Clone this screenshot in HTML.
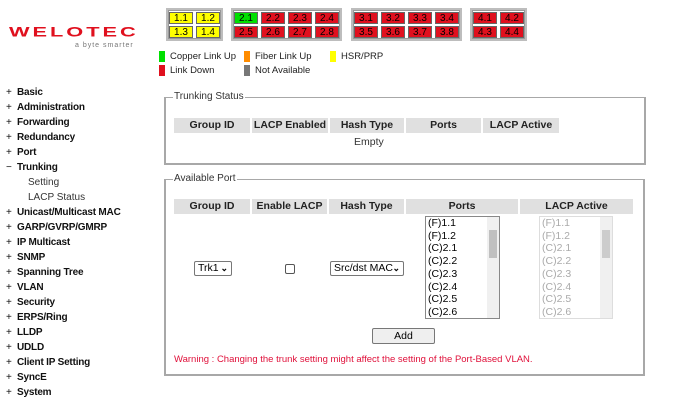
<!DOCTYPE html>
<html><head><style>
*{box-sizing:border-box}
body{margin:0;width:680px;height:409px;background:#fff;font-family:"Liberation Sans",Arial,sans-serif;font-size:11px;color:#000;position:relative;overflow:hidden}
.a{position:absolute}
.blk{position:absolute;border:2px solid #bdbdbd;background:#fff;box-shadow:inset 0 0 0 1px #999}
.c{position:absolute;width:24px;height:12px;border:1px solid #666;font-size:10px;text-align:center;line-height:11px}
.y{background:#ffff00}.r{background:#e0101e}.g{background:#00e000}
.sq{position:absolute;width:6px;height:11px}
.lg{position:absolute;font-size:9.5px;color:#222}
.nav{position:absolute;left:6px;font-weight:bold;font-size:10px;letter-spacing:-0.2px;color:#111;margin-top:1px}
.nav span{display:inline-block;width:11px;font-weight:normal}
.sub{position:absolute;left:28px;font-size:10px;color:#333;margin-top:1px}
.fs{position:absolute;border:2px solid #a8a8a8;border-top-width:1px;border-left-width:2px}
.fl{position:absolute;background:#fff;font-size:10px;color:#333;padding:0 1px}
.th{position:absolute;background:#e0e0e0;font-weight:bold;font-size:10.5px;text-align:center;height:15px;line-height:15px;color:#222}
.lb{position:absolute;border:1px solid #888;background:#fff;font-size:10.5px;line-height:12.7px;padding-left:2px}
.sb{position:absolute;right:0;top:0;width:12px;height:100%;background:#f0f0f0}
.sel{position:absolute;border:1px solid #777;border-radius:2px;background:#fff;font-size:10.5px;height:15px;line-height:13px;padding-left:3px;white-space:nowrap;overflow:hidden}
.sel b{position:absolute;right:3px;top:0;font-weight:bold;font-size:9px}
</style></head><body>
<div class="a" style="left:9px;top:24px;font-size:22px;font-weight:bold;color:#e0101e;letter-spacing:3px;transform:scale(0.99,0.62);transform-origin:top left">WELOTEC</div>
<div class="a" style="left:75px;top:42px;font-size:7px;color:#777;letter-spacing:1px">a byte smarter</div>

<div class="blk" style="left:166px;top:8px;width:57px;height:33px"></div>
<div class="c y" style="left:169px;top:12px">1.1</div><div class="c y" style="left:196px;top:12px">1.2</div>
<div class="c y" style="left:169px;top:26px">1.3</div><div class="c y" style="left:196px;top:26px">1.4</div>
<div class="blk" style="left:231px;top:8px;width:111px;height:33px"></div>
<div class="c g" style="left:234px;top:12px">2.1</div><div class="c r" style="left:261px;top:12px">2.2</div><div class="c r" style="left:288px;top:12px">2.3</div><div class="c r" style="left:315px;top:12px">2.4</div>
<div class="c r" style="left:234px;top:26px">2.5</div><div class="c r" style="left:261px;top:26px">2.6</div><div class="c r" style="left:288px;top:26px">2.7</div><div class="c r" style="left:315px;top:26px">2.8</div>
<div class="blk" style="left:351px;top:8px;width:111px;height:33px"></div>
<div class="c r" style="left:354px;top:12px">3.1</div><div class="c r" style="left:381px;top:12px">3.2</div><div class="c r" style="left:408px;top:12px">3.3</div><div class="c r" style="left:435px;top:12px">3.4</div>
<div class="c r" style="left:354px;top:26px">3.5</div><div class="c r" style="left:381px;top:26px">3.6</div><div class="c r" style="left:408px;top:26px">3.7</div><div class="c r" style="left:435px;top:26px">3.8</div>
<div class="blk" style="left:470px;top:8px;width:57px;height:33px"></div>
<div class="c r" style="left:473px;top:12px">4.1</div><div class="c r" style="left:500px;top:12px">4.2</div>
<div class="c r" style="left:473px;top:26px">4.3</div><div class="c r" style="left:500px;top:26px">4.4</div>

<div class="sq" style="left:159px;top:51px;background:#00e000"></div><div class="lg" style="left:170px;top:51px">Copper Link Up</div>
<div class="sq" style="left:244px;top:51px;background:#ff8c00"></div><div class="lg" style="left:255px;top:51px">Fiber Link Up</div>
<div class="sq" style="left:330px;top:51px;background:#ffff00"></div><div class="lg" style="left:341px;top:51px">HSR/PRP</div>
<div class="sq" style="left:159px;top:65px;background:#e0101e"></div><div class="lg" style="left:170px;top:65px">Link Down</div>
<div class="sq" style="left:244px;top:65px;background:#777"></div><div class="lg" style="left:255px;top:65px">Not Available</div>

<div class="nav" style="top:86px"><span>+</span>Basic</div>
<div class="nav" style="top:101px"><span>+</span>Administration</div>
<div class="nav" style="top:116px"><span>+</span>Forwarding</div>
<div class="nav" style="top:131px"><span>+</span>Redundancy</div>
<div class="nav" style="top:146px"><span>+</span>Port</div>
<div class="nav" style="top:161px"><span>−</span>Trunking</div>
<div class="sub" style="top:176px">Setting</div>
<div class="sub" style="top:191px">LACP Status</div>
<div class="nav" style="top:206px"><span>+</span>Unicast/Multicast MAC</div>
<div class="nav" style="top:221px"><span>+</span>GARP/GVRP/GMRP</div>
<div class="nav" style="top:236px"><span>+</span>IP Multicast</div>
<div class="nav" style="top:251px"><span>+</span>SNMP</div>
<div class="nav" style="top:266px"><span>+</span>Spanning Tree</div>
<div class="nav" style="top:281px"><span>+</span>VLAN</div>
<div class="nav" style="top:296px"><span>+</span>Security</div>
<div class="nav" style="top:311px"><span>+</span>ERPS/Ring</div>
<div class="nav" style="top:326px"><span>+</span>LLDP</div>
<div class="nav" style="top:341px"><span>+</span>UDLD</div>
<div class="nav" style="top:356px"><span>+</span>Client IP Setting</div>
<div class="nav" style="top:371px"><span>+</span>SyncE</div>
<div class="nav" style="top:386px"><span>+</span>System</div>

<div class="fs" style="left:164px;top:97px;width:482px;height:68px"></div>
<div class="fl" style="left:173px;top:91px">Trunking Status</div>
<div class="th" style="left:174px;top:118px;width:76px">Group ID</div>
<div class="th" style="left:252px;top:118px;width:76px">LACP Enabled</div>
<div class="th" style="left:330px;top:118px;width:74px">Hash Type</div>
<div class="th" style="left:406px;top:118px;width:75px">Ports</div>
<div class="th" style="left:483px;top:118px;width:76px">LACP Active</div>
<div class="a" style="left:354px;top:136px;font-size:10.5px;color:#333">Empty</div>

<div class="fs" style="left:164px;top:179px;width:481px;height:197px"></div>
<div class="fl" style="left:173px;top:173px">Available Port</div>
<div class="th" style="left:174px;top:199px;width:76px">Group ID</div>
<div class="th" style="left:252px;top:199px;width:75px">Enable LACP</div>
<div class="th" style="left:329px;top:199px;width:75px">Hash Type</div>
<div class="th" style="left:406px;top:199px;width:112px">Ports</div>
<div class="th" style="left:520px;top:199px;width:113px">LACP Active</div>
<div class="sel" style="left:194px;top:261px;width:38px">Trk1<b>⌄</b></div>
<div class="a" style="left:285px;top:264px;width:10px;height:10px;border:1px solid #555;border-radius:2px"></div>
<div class="sel" style="left:330px;top:261px;width:74px">Src/dst MAC<b>⌄</b></div>
<div class="lb" style="left:425px;top:216px;width:75px;height:103px;color:#000">(F)1.1<br>(F)1.2<br>(C)2.1<br>(C)2.2<br>(C)2.3<br>(C)2.4<br>(C)2.5<br>(C)2.6<div class="sb"><div style="position:absolute;left:2px;top:13px;width:8px;height:28px;background:#c0c0c0"></div></div></div>
<div class="lb" style="left:539px;top:216px;width:74px;height:103px;color:#aaa;border-color:#ddd">(F)1.1<br>(F)1.2<br>(C)2.1<br>(C)2.2<br>(C)2.3<br>(C)2.4<br>(C)2.5<br>(C)2.6<div class="sb"><div style="position:absolute;left:2px;top:13px;width:8px;height:28px;background:#ccc"></div></div></div>
<div class="a" style="left:372px;top:328px;width:63px;height:16px;border:1px solid #777;border-radius:2px;background:#efefef;text-align:center;font-size:10.5px;line-height:14px">Add</div>
<div class="a" style="left:174px;top:354px;font-size:9.5px;color:#e0103a">Warning : Changing the trunk setting might affect the setting of the Port-Based VLAN.</div>
</body></html>
